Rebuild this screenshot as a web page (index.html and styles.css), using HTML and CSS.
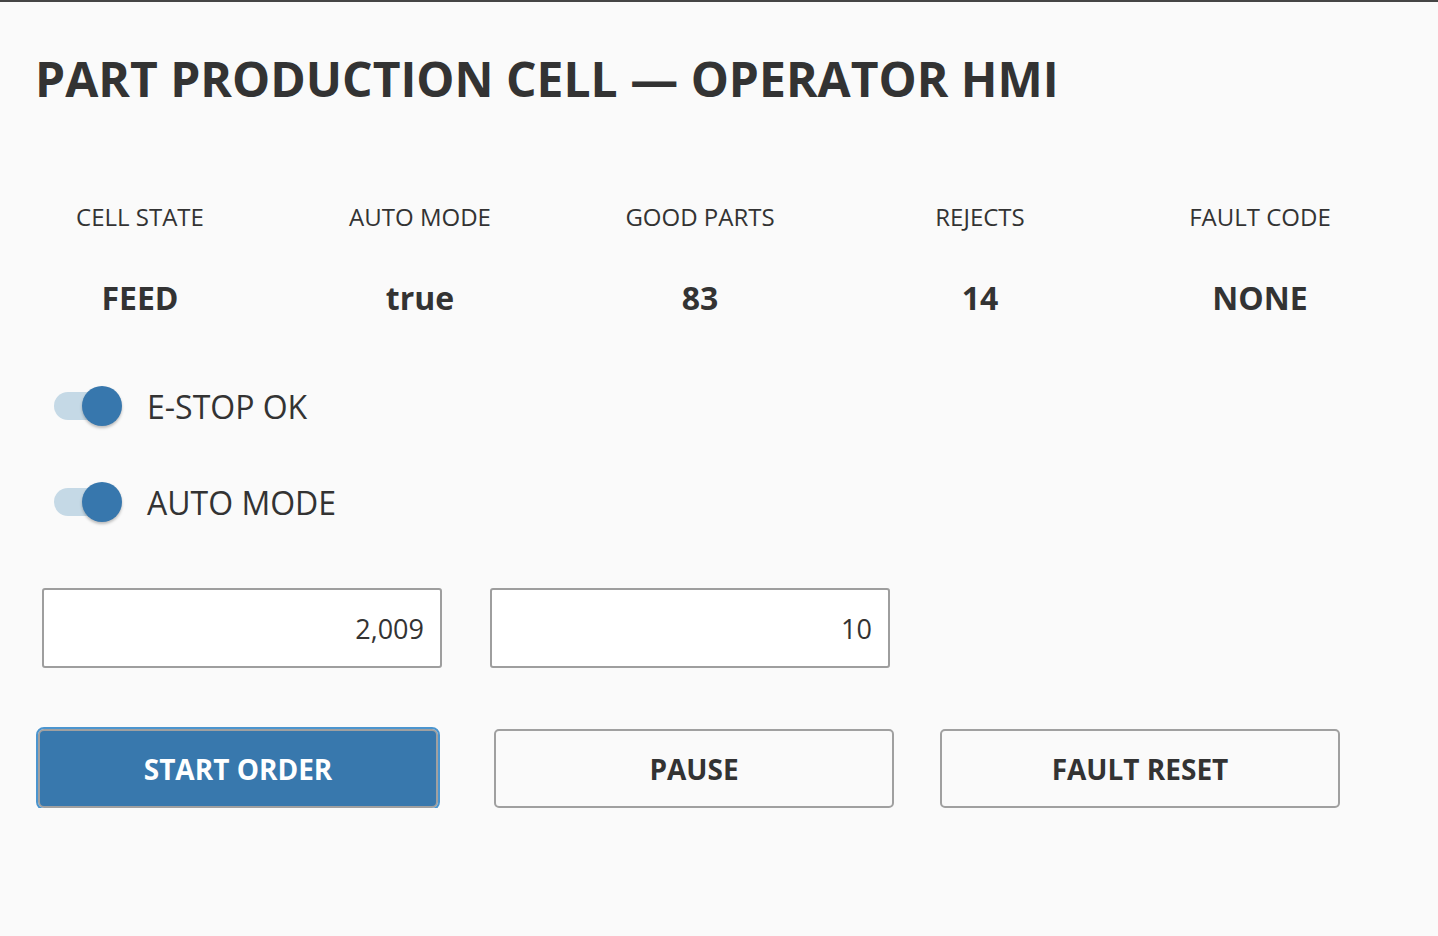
FILE: index.html
```html
<!DOCTYPE html>
<html lang="en">
<head>
<meta charset="utf-8">
<title>Part Production Cell — Operator HMI</title>
<link rel="stylesheet" href="styles.css">
</head>
<body>
<div class="page">
  <h1 class="title">PART PRODUCTION CELL — OPERATOR HMI</h1>

  <div class="stats">
    <div class="stat"><div class="stat-label">CELL STATE</div><div class="stat-value">FEED</div></div>
    <div class="stat"><div class="stat-label">AUTO MODE</div><div class="stat-value">true</div></div>
    <div class="stat"><div class="stat-label">GOOD PARTS</div><div class="stat-value">83</div></div>
    <div class="stat"><div class="stat-label">REJECTS</div><div class="stat-value">14</div></div>
    <div class="stat"><div class="stat-label">FAULT CODE</div><div class="stat-value">NONE</div></div>
  </div>

  <div class="toggles">
    <label class="toggle"><span class="switch"><span class="track"></span><span class="knob"></span></span><span class="toggle-label">E-STOP OK</span></label>
    <label class="toggle"><span class="switch"><span class="track"></span><span class="knob"></span></span><span class="toggle-label">AUTO MODE</span></label>
  </div>

  <div class="inputs">
    <input class="num" type="text" value="2,009">
    <input class="num" type="text" value="10">
  </div>

  <div class="buttons">
    <button class="btn btn-primary">START ORDER</button>
    <button class="btn btn-pause">PAUSE</button>
    <button class="btn btn-reset">FAULT RESET</button>
  </div>
</div>
</body>
</html>
```

FILE: styles.css
```css
html, body {
  margin: 0;
  padding: 0;
}
body {
  background: #fafafa;
  border-top: 2px solid #454545;
  font-family: "Open Sans", "Noto Sans", sans-serif;
  color: #333333;
}
.page {
  padding: 0;
}
.title {
  margin: 0;
  padding: 43px 0 0 35px;
  font-size: 48px;
  line-height: 67px;
  font-weight: 700;
  color: #333333;
  letter-spacing: 0;
}
.stats {
  display: grid;
  grid-template-columns: repeat(5, 280px);
  margin-top: 90px;
}
.stat {
  display: flex;
  flex-direction: column;
  align-items: center;
}
.stat-label {
  font-size: 24px;
  line-height: 30px;
  color: #333333;
}
.stat-value {
  margin-top: 50px;
  font-size: 32px;
  line-height: 32px;
  font-weight: 700;
  color: #333333;
}
.toggles {
  display: flex;
  flex-direction: column;
  gap: 56px;
  padding-left: 54px;
  margin-top: 72px;
}
.toggle {
  display: flex;
  align-items: center;
  height: 40px;
}
.switch {
  position: relative;
  width: 68px;
  height: 40px;
  flex: none;
}
.track {
  position: absolute;
  left: 0;
  top: 6px;
  width: 56px;
  height: 28px;
  border-radius: 14px;
  background: #c5d9e6;
}
.knob {
  position: absolute;
  left: 28px;
  top: 0;
  width: 40px;
  height: 40px;
  border-radius: 50%;
  background: #3777ad;
  box-shadow: 0 2px 3px rgba(0, 0, 0, 0.25);
}
.toggle-label {
  margin-left: 25px;
  font-size: 32px;
  color: #333333;
}
.inputs {
  display: flex;
  gap: 48px;
  padding-left: 42px;
  margin-top: 66px;
}
.num {
  box-sizing: border-box;
  width: 400px;
  height: 80px;
  border: 2px solid #9e9e9e;
  border-radius: 3px;
  background: #ffffff;
  text-align: right;
  padding: 0 16px;
  font-family: "Open Sans", "Noto Sans", sans-serif;
  font-size: 27px;
  color: #333333;
  outline: none;
}
.buttons {
  display: flex;
  padding-left: 38px;
  margin-top: 61px;
}
.btn {
  box-sizing: border-box;
  width: 400px;
  height: 79px;
  border: 2px solid #a0a0a0;
  border-radius: 5px;
  background: #fafafa;
  font-family: "Open Sans", "Noto Sans", sans-serif;
  font-size: 28px;
  font-weight: 700;
  color: #333333;
  cursor: pointer;
}
.btn-primary {
  background: #3878ad;
  color: #ffffff;
  outline: 2px solid #4b95cf;
  outline-offset: 0;
  border-radius: 6px;
}
.btn-pause {
  margin-left: 56px;
}
.btn-reset {
  margin-left: 46px;
}
```
